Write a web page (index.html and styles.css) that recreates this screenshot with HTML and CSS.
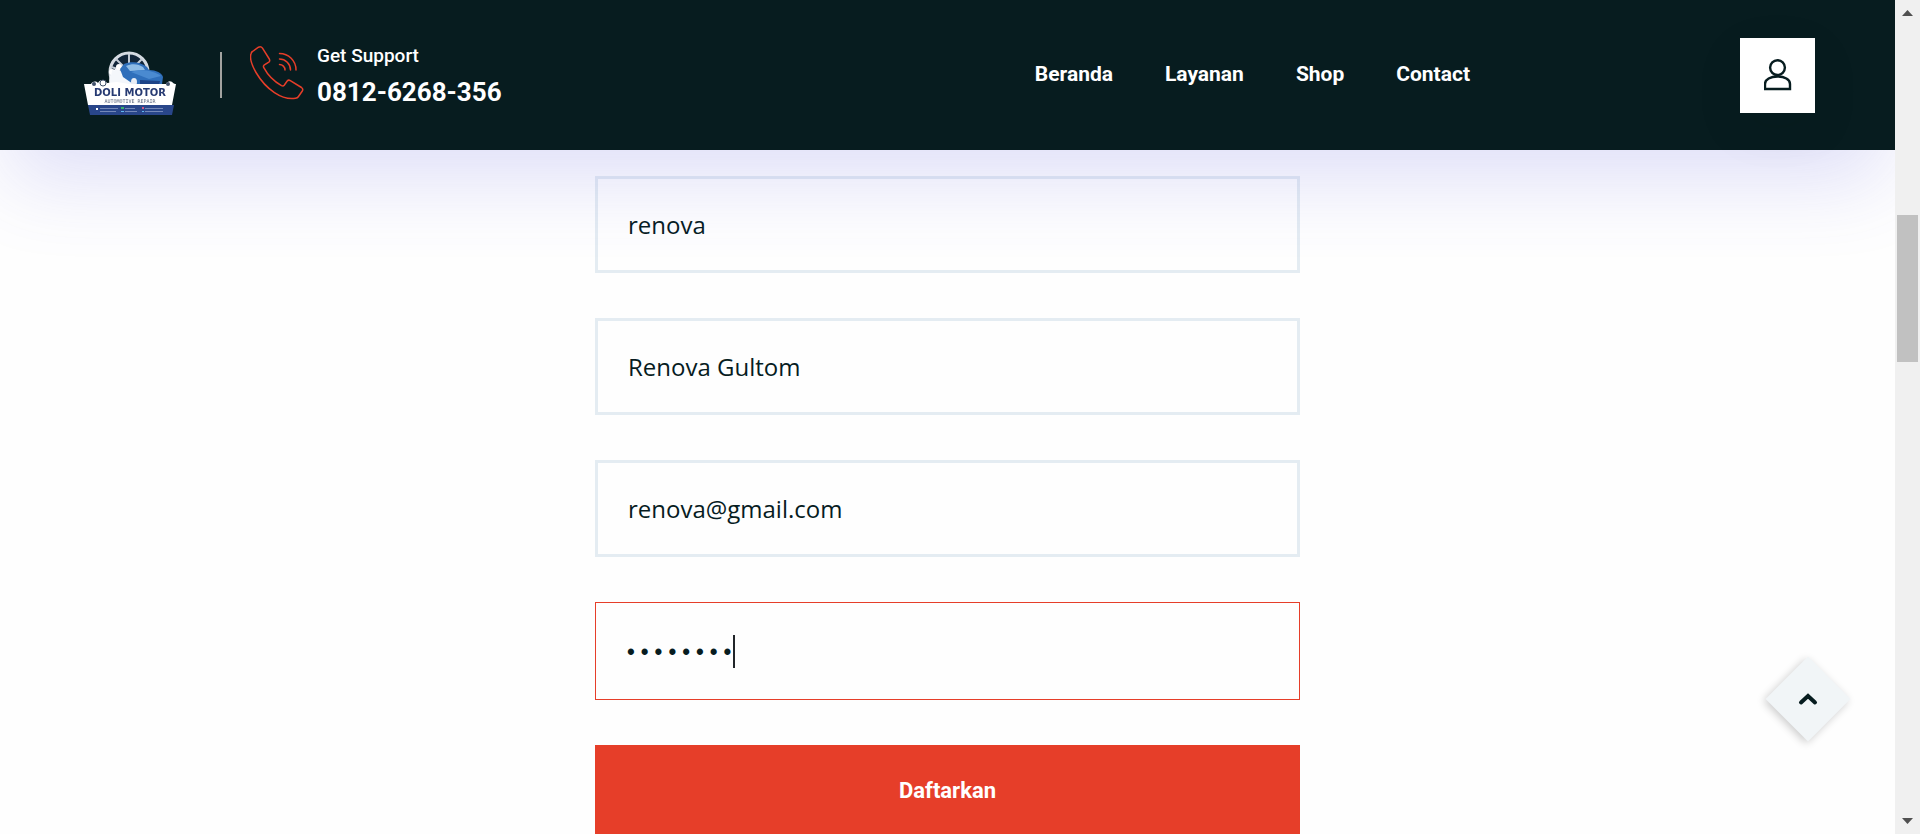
FILE: index.html
```html
<!DOCTYPE html>
<html lang="id">
<head>
<meta charset="utf-8">
<meta name="viewport" content="width=device-width, initial-scale=1">
<title>Doli Motor</title>
<link rel="stylesheet" href="styles.css">
</head>
<body>
<div class="page">
  <header class="header">
    <a class="logo" href="#" aria-label="Doli Motor">
      <svg class="logo-art" width="94" height="66" viewBox="0 0 94 66">
        <circle cx="45" cy="22" r="19" fill="#12263a" stroke="#d5dbe2" stroke-width="3"/>
        <g stroke="#c3cbd5" stroke-width="2"><path d="M45 22V4M45 22L32 9M45 22L58 9M45 22L27 17M45 22L63 17"/></g>
        <path d="M26 36c-3-8 2-16 7-18l5 4 6 2 8 12z" fill="#f4f7fb"/>
        <circle cx="28" cy="22" r="3" fill="#fff"/><circle cx="35" cy="17" r="3" fill="#fff"/>
        <path d="M36 19l4-5c7-3 17-2 23 3l2 3c7 0 13 3 14 7l-1 7c-7 3-19 3-26 2l-13-9z" fill="#2f6fbb"/>
        <path d="M42 16c6-3 13-2 17 1l2 3-15 1z" fill="#8fbce6"/>
        <path d="M47 22c9-3 22-2 30 4l-12 3z" fill="#4a8ad0"/>
        <path d="M56 30l20 1-1 4-19 1z" fill="#1d4387"/>
        <path d="M28 20c5 1 9 5 10 9l9 6H26z" fill="#f4f7fb"/>
        <ellipse cx="50" cy="32" rx="3" ry="4" fill="#e7edf5"/>
        <path d="M0 34h7c2-3 5-3 7-1 2-4 7-4 9 0l10-1 12 2h37c2-4 6-3 7-1l2 1h1l-4 21H4z" fill="#fff"/>
        <path d="M4 55h86l-2 10H6z" fill="#29468a"/>
        <circle cx="19" cy="33" r="3" fill="#fff" stroke="#40516a"/><circle cx="10" cy="34" r="2" fill="#40516a"/>
        <circle cx="84" cy="34" r="2" fill="#40516a"/>
        <text class="logo-name" x="46" y="46" text-anchor="middle">DOLI MOTOR</text>
        <text class="logo-sub" x="46" y="53" text-anchor="middle">AUTOMOTIVE REPAIR</text>
        <g fill="#7488b8"><path d="M16 58h18v1H16zM16 61h16v1H16zM41 58h10v1H41zM41 61h12v1H41zM61 58h18v1H61zM61 61h18v1H61z"/></g>
        <path d="M12 58h2v2h-2z" fill="#fff"/><path d="M37 57h3v2h-3z" fill="#39b36b"/><path d="M37 61h3v1h-3z" fill="#61b8ee"/>
        <path d="M58 57h2v2h-2z" fill="#d55784"/><path d="M58 61h2v1h-2z" fill="#61b8ee"/>
      </svg>
    </a>
    <div class="support">
      <svg class="support-icon" width="54" height="54" viewBox="0 0 54 54" fill="none" stroke="#e63e29" stroke-width="1.5" stroke-linejoin="round" stroke-linecap="round">
        <path d="M2.500 5.500L8.500 1.200Q11 0 12.500 2.200L19.300 13Q20.300 15 18.800 16.200L14 19.200Q13 20.200 13.800 21.600C18 29.500 23 34.800 31.500 39.600Q33.200 40.500 34.200 39.200L37.200 35Q38.500 33.500 40.300 34.600L51.500 41.500Q53.500 43 52.300 45L48.300 50.800Q47.500 52 45.500 52.300C32 54.500 16 43.500 6 26.500C1.500 18.500-.5 11 1.200 7.200Q1.600 6 2.500 5.500Z"/>
        <path d="M29.500 7.500A16.500 16.500 0 0 1 46 24M29.500 13A11 11 0 0 1 40.500 24M29.500 18.500A5.500 5.500 0 0 1 35 24"/>
      </svg>
      <div class="support-text">
        <span class="support-label">Get Support</span>
        <a class="support-number" href="tel:08126268356">0812-6268-356</a>
      </div>
    </div>
    <nav class="nav">
      <a href="#">Beranda</a>
      <a href="#">Layanan</a>
      <a href="#">Shop</a>
      <a href="#">Contact</a>
    </nav>
    <button class="account" type="button" aria-label="Akun">
      <svg width="28" height="32" viewBox="0 0 28 32" fill="none" stroke="#071c1f" stroke-width="2.400">
        <circle cx="13.500" cy="8.600" r="7.400"/>
        <path d="M1 30V25C1 20.500 6.500 17.500 13.500 17.500S26 20.500 26 25V30Z"/>
      </svg>
    </button>
  </header>
  <main class="content">
    <form class="form">
      <input class="field" type="text" aria-label="Username" value="renova">
      <input class="field" type="text" aria-label="Nama" value="Renova Gultom">
      <input class="field" type="email" aria-label="Email" value="renova@gmail.com">
      <div class="password">
        <input class="field field-active" type="password" aria-label="Password" value="renova12">
        <span class="caret"></span>
      </div>
      <button class="submit" type="submit">Daftarkan</button>
    </form>
  </main>
  <a class="to-top" href="#" aria-label="Kembali ke atas">
    <svg width="20" height="14" viewBox="0 0 20 14" fill="none" stroke="#071c1f" stroke-width="4" stroke-linecap="round"><path d="M3 10.500L10 4L17 10.500"/></svg>
  </a>
</div>
<div class="scrollbar" aria-hidden="true">
  <svg width="11" height="6" viewBox="0 0 11 6"><path d="M0 6L5.500 0L11 6Z" fill="#505050"/></svg>
  <div class="track"><div class="thumb"></div></div>
  <svg width="11" height="6" viewBox="0 0 11 6"><path d="M0 0L5.500 6L11 0Z" fill="#505050"/></svg>
</div>
</body>
</html>
```
FILE: styles.css
```css
* {
  box-sizing: border-box;
}

body {
  margin: 0;
  display: flex;
  height: 100vh;
  overflow: hidden;
  background: #fefefe;
  color: #071c1f;
  font-family: Roboto, "Liberation Sans", sans-serif;
}

a {
  color: inherit;
  text-decoration: none;
}

button {
  border: 0;
  cursor: pointer;
  font-family: inherit;
}

.page {
  position: relative;
  flex: 1;
  min-width: 0;
  overflow: hidden;
}

.header {
  position: relative;
  z-index: 2;
  display: flex;
  align-items: center;
  height: 150px;
  padding: 0 80px 0 84px;
  background: #071c1f;
  color: #fff;
  box-shadow: 0 40px 80px -10px rgba(82, 85, 222, 0.18);
}

.logo {
  display: flex;
  padding-top: 16px;
}

.logo-art {
  filter: blur(0.5px);
}

.logo-name {
  fill: #263a72;
  font: bold 10px "DejaVu Sans", sans-serif;
}

.logo-sub {
  fill: #59647c;
  font: 5px "DejaVu Sans Mono", monospace;
}

.support {
  display: flex;
  align-items: center;
  gap: 13px;
  margin-left: 42px;
}

.support::before {
  content: "";
  width: 2px;
  height: 46px;
  margin-right: 15px;
  background: #a3a3a0;
}

.support-icon {
  margin-bottom: 4px;
}

.support-text {
  display: flex;
  flex-direction: column;
}

.support-label {
  font-size: 19px;
  font-weight: 500;
  line-height: 34px;
}

.support-number {
  font-size: 26px;
  font-weight: 700;
  line-height: 38px;
}

.nav {
  display: flex;
  gap: 52px;
  margin: 0 270px 2px auto;
  font-size: 21px;
  font-weight: 700;
  line-height: 32px;
}

.account {
  display: flex;
  align-items: center;
  justify-content: center;
  width: 75px;
  height: 75px;
  padding: 0;
  background: #fff;
  box-shadow: 0 16px 50px rgba(7, 28, 31, 0.08);
}

.content {
  display: flex;
  justify-content: center;
  padding-top: 26px;
}

.form {
  display: flex;
  flex-direction: column;
  gap: 45px;
  width: 705px;
}

.field {
  display: block;
  width: 100%;
  height: 97px;
  padding: 0 30px;
  border: 3px solid #e4ecf2;
  border-radius: 0;
  outline: 0;
  background: #fefefe;
  color: #071c1f;
  font-family: "Open Sans", sans-serif;
  font-size: 24px;
}

.field-active {
  height: 98px;
  padding: 6px 28px 0;
  border: 1px solid #e63e29;
  font-family: "Liberation Mono", monospace;
  font-size: 23px;
}

.password {
  position: relative;
}

.caret {
  position: absolute;
  top: 33px;
  left: 138px;
  width: 2px;
  height: 33px;
  background: #212529;
}

.submit {
  height: 90px;
  padding: 0;
  background: #e63e29;
  color: #fff;
  font-size: 22px;
  font-weight: 700;
}

.to-top {
  position: absolute;
  right: 57px;
  bottom: 105px;
  display: flex;
  align-items: center;
  justify-content: center;
  width: 60px;
  height: 60px;
  background: #f1f5f7;
  box-shadow: 0 3px 9px rgba(0, 0, 0, 0.2);
  transform: rotate(45deg);
}

.to-top svg {
  transform: rotate(-45deg);
}

.scrollbar {
  display: flex;
  flex-direction: column;
  align-items: center;
  justify-content: space-between;
  width: 25px;
  padding: 10px 0;
  background: #f0f0f0;
}

.track {
  flex: 1;
  width: 21px;
  padding: 199px 0;
}

.thumb {
  height: 147px;
  background: #c1c1c1;
}
```
